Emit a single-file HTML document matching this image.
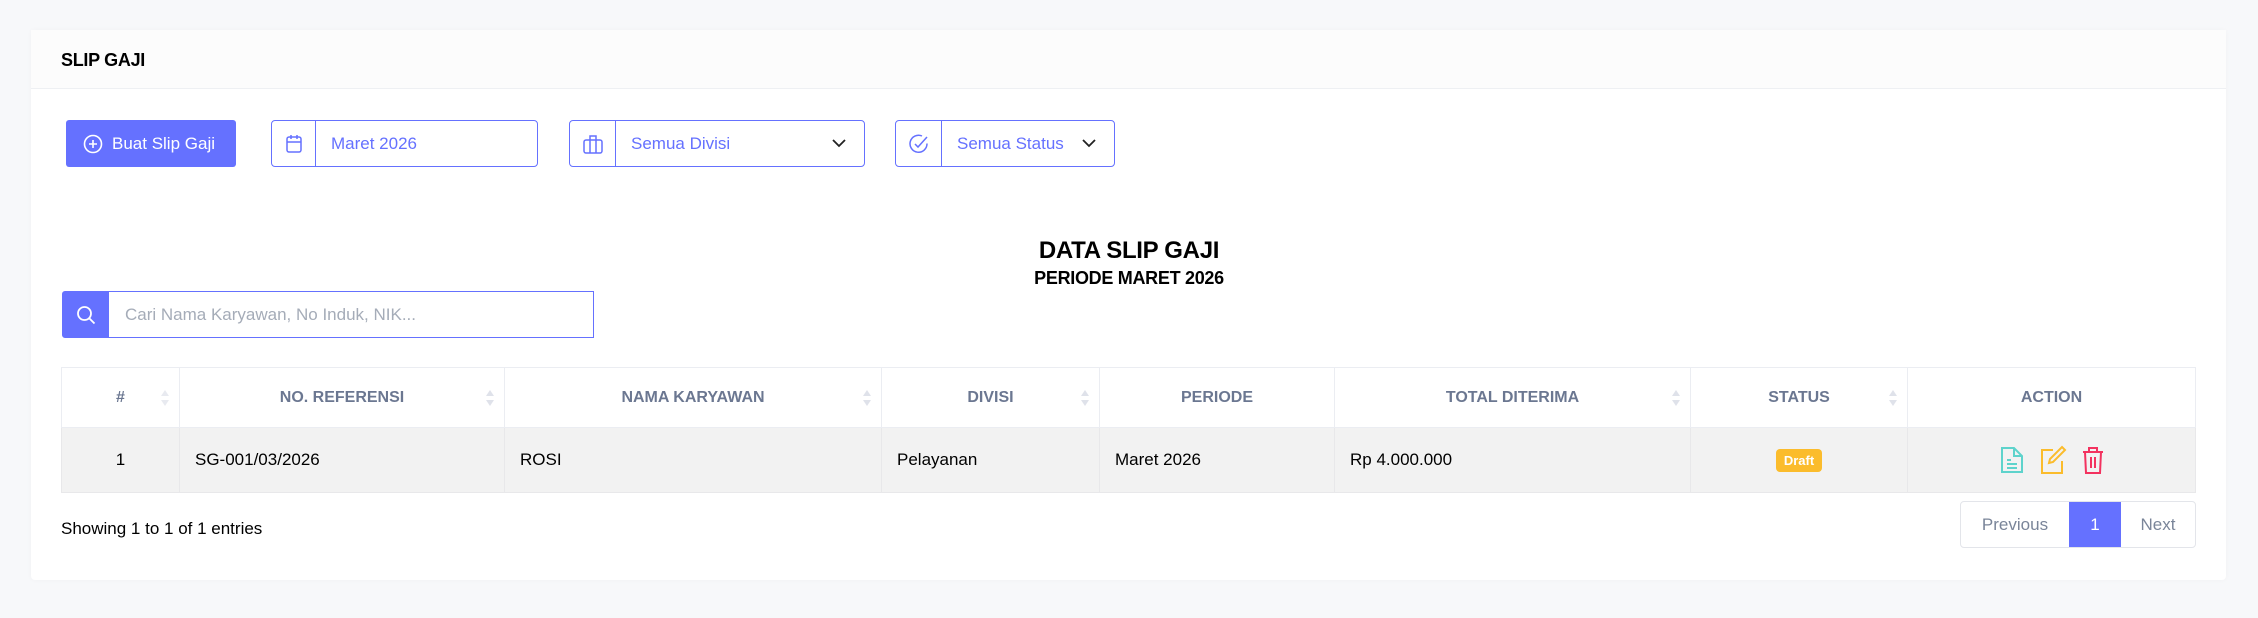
<!DOCTYPE html>
<html><head><meta charset="utf-8"><style>
*{box-sizing:border-box;margin:0;padding:0}
body{width:2258px;height:618px;background:#f7f8fa;font-family:"Liberation Sans",Arial,sans-serif;position:relative;overflow:hidden;color:#000}
.card{position:absolute;left:31px;top:30px;width:2195px;height:550px;background:#fff;border-radius:4px;box-shadow:0 0 6px rgba(0,0,0,0.03)}
.hdr{position:absolute;left:0;top:0;width:100%;height:59px;background:#fcfcfc;border-bottom:1px solid #eef0f3}
.hdr span{position:absolute;left:30px;top:20px;font-size:18px;font-weight:bold;letter-spacing:-0.3px}
.abs{position:absolute}
.btn{left:66px;top:120px;width:170px;height:47px;background:#6571ff;border-radius:3px;color:#fff;font-size:17px;display:flex;align-items:center;padding-left:17px}
.btn svg{margin-right:9px}
.inp{border:1px solid #6571ff;border-radius:4px;height:47px;top:120px;display:flex;align-items:center;color:#6571ff;font-size:17px}
.inp .ic{height:100%;border-right:1px solid #6571ff;display:flex;align-items:center;justify-content:center}
.inp .tx{padding-left:15px;flex:1}
.chev{margin-right:18px}
.t1{left:0;width:2258px;text-align:center;top:237px;font-size:24px;font-weight:bold;letter-spacing:-0.3px}
.t2{left:0;width:2258px;text-align:center;top:268px;font-size:18px;font-weight:bold;letter-spacing:-0.3px}
.search{left:62px;top:291px;width:532px;height:47px;border:1px solid #6571ff;display:flex;align-items:center;border-radius:3px 0 0 3px}
.search .ic{width:46px;height:100%;background:#6571ff;display:flex;align-items:center;justify-content:center}
.search .tx{padding-left:16px;color:#a5acb8;font-size:17px}
table{position:absolute;left:61px;top:367px;width:2135px;border-collapse:collapse;font-size:17px}
th{height:60px;border:1px solid #ebedf2;color:#6b7791;font-weight:bold;font-size:16px;text-align:center;position:relative}
td{height:65px;border:1px solid #e8e8ea;background:#f2f2f2;padding-left:15px}
.srt{position:absolute;right:10px;top:22px;width:8px;height:16px}
.srt:before{content:"";position:absolute;left:0;top:0;border-left:4px solid transparent;border-right:4px solid transparent;border-bottom:6px solid #dfe2ea}
.srt:after{content:"";position:absolute;left:0;bottom:0;border-left:4px solid transparent;border-right:4px solid transparent;border-top:6px solid #dfe2ea}
.draft{display:inline-block;background:#fbbc2c;color:#fff;font-size:13px;font-weight:bold;padding:4px 8px;border-radius:4px}
.show{left:61px;top:519px;font-size:17px}
.pg{left:1960px;top:501px;width:236px;height:47px;border:1px solid #e3e5ea;border-radius:4px;display:flex;font-size:17px;color:#7a8599;overflow:hidden}
.pg div{display:flex;align-items:center;justify-content:center}
</style></head><body>
<div class="card"><div class="hdr"><span>SLIP GAJI</span></div></div>

<div class="abs btn"><svg width="20" height="20" viewBox="0 0 20 20" fill="none" stroke="#fff" stroke-width="1.6"><circle cx="10" cy="10" r="8.5"/><path d="M10 6v8M6 10h8"/></svg>Buat Slip Gaji</div>

<div class="abs inp" style="left:271px;width:267px"><div class="ic" style="width:44px"><svg width="16" height="20" viewBox="0 0 16 20" fill="none" stroke="#6571ff" stroke-width="1.5"><rect x="1" y="3" width="14" height="15" rx="2"/><path d="M1 8h14M5 1v4M11 1v4"/></svg></div><div class="tx">Maret 2026</div></div>

<div class="abs inp" style="left:569px;width:296px"><div class="ic" style="width:46px"><svg width="20" height="20" viewBox="0 0 20 20" fill="none" stroke="#6571ff" stroke-width="1.5"><rect x="1" y="6" width="18" height="13" rx="2"/><path d="M7 6V2h6v4M7 6v13M13 6v13"/></svg></div><div class="tx">Semua Divisi</div><svg class="chev" width="14" height="9" viewBox="0 0 14 9" fill="none" stroke="#222" stroke-width="1.8"><path d="M1 1l6 6 6-6"/></svg></div>

<div class="abs inp" style="left:895px;width:220px"><div class="ic" style="width:46px"><svg width="20" height="20" viewBox="0 0 20 20" fill="none" stroke="#6571ff" stroke-width="1.5"><path d="M18 9.5A8.5 8.5 0 1 1 13 2"/><path d="M6 10l3 3 9-10"/></svg></div><div class="tx">Semua Status</div><svg class="chev" width="14" height="9" viewBox="0 0 14 9" fill="none" stroke="#222" stroke-width="1.8"><path d="M1 1l6 6 6-6"/></svg></div>

<div class="abs t1">DATA SLIP GAJI</div>
<div class="abs t2">PERIODE MARET 2026</div>

<div class="abs search"><div class="ic"><svg width="20" height="20" viewBox="0 0 20 20" fill="none" stroke="#fff" stroke-width="1.8"><circle cx="8.5" cy="8.5" r="6.5"/><path d="M13.5 13.5l5 5"/></svg></div><div class="tx">Cari Nama Karyawan, No Induk, NIK...</div></div>

<table>
<tr>
<th style="width:118px">#<span class="srt" style="opacity:.7"></span></th>
<th style="width:325px">NO. REFERENSI<span class="srt"></span></th>
<th style="width:377px">NAMA KARYAWAN<span class="srt"></span></th>
<th style="width:218px">DIVISI<span class="srt"></span></th>
<th style="width:235px">PERIODE</th>
<th style="width:356px">TOTAL DITERIMA<span class="srt"></span></th>
<th style="width:217px">STATUS<span class="srt"></span></th>
<th>ACTION</th>
</tr>
<tr>
<td style="text-align:center;padding:0">1</td>
<td>SG-001/03/2026</td>
<td>ROSI</td>
<td>Pelayanan</td>
<td>Maret 2026</td>
<td>Rp 4.000.000</td>
<td style="text-align:center;padding:0"><span class="draft">Draft</span></td>
<td style="text-align:center;padding:0">
<svg width="26" height="30" viewBox="0 0 26 30" fill="none" stroke="#5ed3cc" stroke-width="2" style="margin:0 7px;vertical-align:middle"><path d="M3 3h12l8 8v16H3z"/><path d="M15 3v8h8M8 15h4M8 19h10M8 23h10"/></svg><svg width="28" height="30" viewBox="0 0 28 30" fill="none" stroke="#fbbc2c" stroke-width="2" style="margin:0 7px;vertical-align:middle"><path d="M14 5H3v23h20V16"/><path d="M23 2l3 3-12 12-4 1 1-4z"/></svg><svg width="24" height="30" viewBox="0 0 24 30" fill="none" stroke="#f3325f" stroke-width="2" style="margin:0 7px;vertical-align:middle"><path d="M2 7h20M8 7V3h8v4M4 7l1 21h14l1-21M10 12v11M14 12v11"/></svg>
</td>
</tr>
</table>

<div class="abs show">Showing 1 to 1 of 1 entries</div>
<div class="abs pg"><div style="width:108px">Previous</div><div style="width:52px;background:#6571ff;color:#fff">1</div><div style="flex:1">Next</div></div>
</body></html>
